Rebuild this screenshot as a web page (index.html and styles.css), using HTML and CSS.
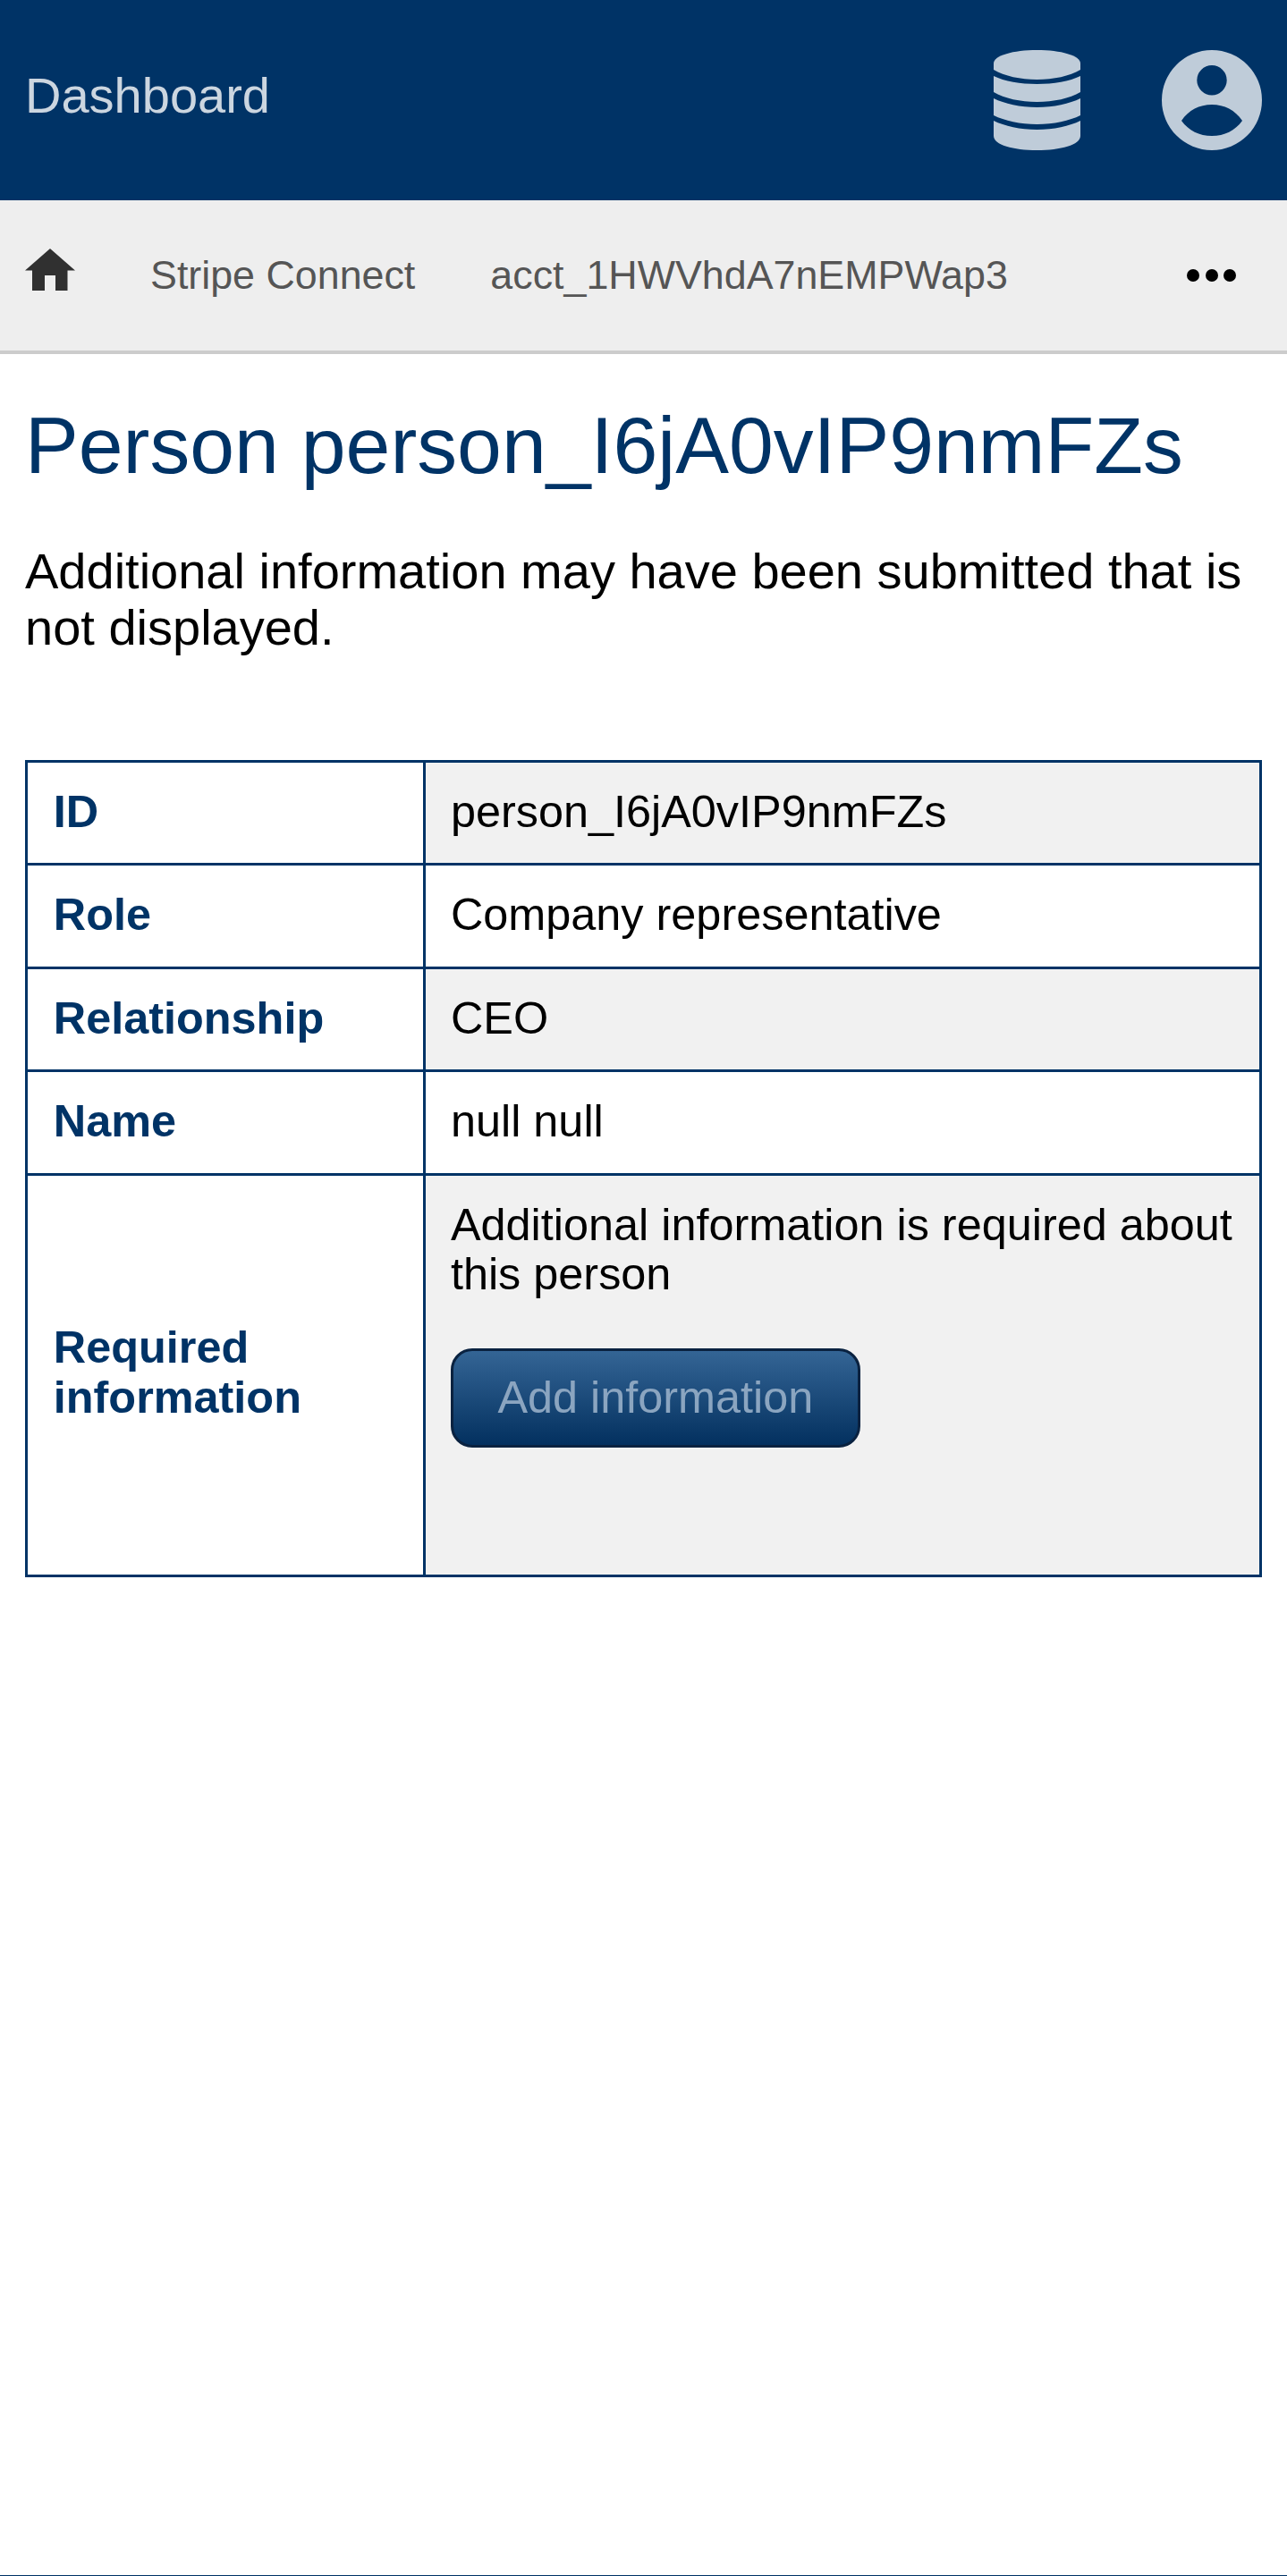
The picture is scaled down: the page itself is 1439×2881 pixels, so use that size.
FILE: index.html
```html
<!DOCTYPE html>
<html lang="en">
<head>
  <meta charset="UTF-8" />
  <meta name="viewport" content="width=device-width, initial-scale=1.0" />
  <title>Person person_I6jA0vIP9nmFZs</title>
  <link rel="stylesheet" href="styles.css">
</head>
<body>
  <header class="topbar">
    <a class="topbar-title" href="#">Dashboard</a>
    <nav class="topbar-icons">
      <svg class="icon-db" viewBox="0 0 97 112" aria-label="Database">
        <path d="M0 15C0 6 22 0 48.500 0C75 0 97 6 97 15V22C85 29 67 33 48.500 33C30 33 12 29 0 22Z"/>
        <path d="M0 29C12 35 30 38 48.500 38C67 38 85 35 97 29V47C85 54 67 58 48.500 58C30 58 12 54 0 47Z"/>
        <path d="M0 54C12 60 30 64 48.500 64C67 64 85 60 97 54V73C85 79 67 83 48.500 83C30 83 12 79 0 73Z"/>
        <path d="M0 79C12 85 30 89 48.500 89C67 89 85 85 97 79V96C97 106 75 112 48.500 112C22 112 0 106 0 96Z"/>
      </svg>
      <svg class="icon-user" viewBox="0 0 112 112" aria-label="Account">
        <path fill-rule="evenodd" d="M56 0a56 56 0 1 1 0 112a56 56 0 1 1 0-112ZM56 17a16.700 16.700 0 1 0 0 33.400a16.700 16.700 0 1 0 0-33.400ZM22 79C30 67 42 61 56 61C70 61 82 67 90 79C82 90 70 96 56 96C42 96 30 90 22 79Z"/>
      </svg>
    </nav>
  </header>

  <div class="crumbs">
    <svg class="icon-home" viewBox="0 0 56 47" aria-label="Home">
      <path d="M28 0L56 24.500H47.500V47H34V30H22V47H8V24.500H0Z"/>
    </svg>
    <a class="crumb" href="#">Stripe Connect</a>
    <a class="crumb" href="#">acct_1HWVhdA7nEMPWap3</a>
    <span class="crumbs-more">
      <i></i><i></i><i></i>
    </span>
  </div>

  <main class="content">
    <h1>Person person_I6jA0vIP9nmFZs</h1>
    <p class="notice">Additional information may have been submitted that is not displayed.</p>

    <table class="details">
      <tr>
        <th>ID</th>
        <td>person_I6jA0vIP9nmFZs</td>
      </tr>
      <tr>
        <th>Role</th>
        <td>Company representative</td>
      </tr>
      <tr>
        <th>Relationship</th>
        <td>CEO</td>
      </tr>
      <tr>
        <th>Name</th>
        <td>null null</td>
      </tr>
      <tr>
        <th class="details-label-tall">Required information</th>
        <td class="details-action">
          <p>Additional information is required about this person</p>
          <a class="btn" href="#">Add information</a>
        </td>
      </tr>
    </table>
  </main>

  <footer class="bottom-line"></footer>
</body>
</html>
```

FILE: styles.css
```css
body {
  margin: 0;
  min-height: 2881px;
  display: flex;
  flex-direction: column;
  font-family: "Liberation Sans", Arial, sans-serif;
  font-size: 56px;
  line-height: 1.15;
  color: #000;
  background: #fff;
}
a {
  text-decoration: none;
}

.topbar {
  height: 224px;
  padding: 0 28px;
  display: flex;
  align-items: center;
  justify-content: space-between;
  background: #003366;
}
.topbar-title {
  padding-bottom: 10px;
  color: #ccd6e0;
}
.topbar-icons {
  display: flex;
  align-items: center;
  gap: 91px;
}
.topbar-icons svg {
  display: block;
  fill: #bfccd9;
}
.icon-db {
  width: 97px;
  height: 112px;
}
.icon-user {
  width: 112px;
  height: 112px;
}

.crumbs {
  height: 168px;
  padding: 0 28px;
  display: flex;
  align-items: center;
  background: #eeeeee;
  border-bottom: 4px solid #cccccc;
}
.icon-home {
  width: 56px;
  height: 47px;
  margin: 0 84px 13px 0;
  fill: #303030;
  flex: none;
}
.crumb {
  margin-right: 84px;
  font-size: 44.800px;
  color: #555555;
}
.crumbs-more {
  margin-left: auto;
  margin-right: 29px;
  display: flex;
  gap: 6.500px;
}
.crumbs-more i {
  width: 14px;
  height: 14px;
  border-radius: 50%;
  background: #000;
}

.content {
  flex: 1;
  padding: 0 28px;
}
h1 {
  margin: 51px 0 0;
  font-size: 89.600px;
  font-weight: normal;
  color: #003366;
}
.notice {
  margin: 57px 0 117px;
  line-height: 63px;
}

.details {
  width: 100%;
  table-layout: fixed;
  border-collapse: collapse;
  font-size: 50.400px;
  line-height: 1.1;
}
.details th,
.details td {
  padding: 27px 28px 30px;
  border: 3px solid #003366;
  text-align: left;
  vertical-align: middle;
}
.details th {
  width: 384.300px;
  padding-left: 28.800px;
  padding-right: 28.800px;
  color: #003366;
  font-weight: bold;
}
.details .details-label-tall {
  padding-bottom: 33px;
}
.details tr:nth-child(odd) td {
  background: #f1f1f1;
}
.details .details-action {
  padding-bottom: 142px;
}
.details-action p {
  margin: 0 0 55px;
}

.btn {
  display: block;
  box-sizing: border-box;
  width: 458px;
  height: 111px;
  line-height: 103px;
  text-align: center;
  border: 3px solid #0a2240;
  border-radius: 24px;
  background: linear-gradient(to bottom, #346595, #03305f);
  color: #8ba5c0;
}

.bottom-line {
  border-top: 1px solid #003366;
}
```
